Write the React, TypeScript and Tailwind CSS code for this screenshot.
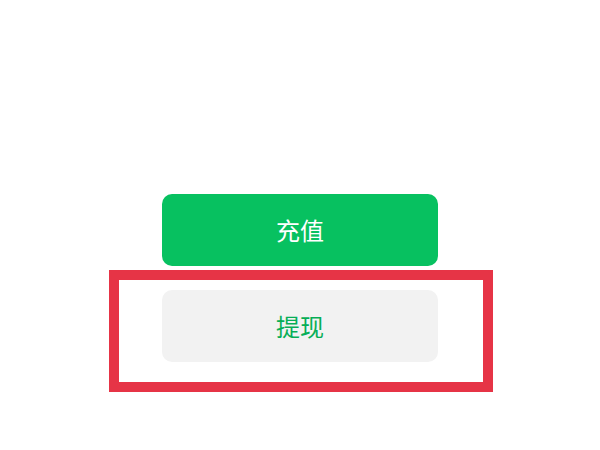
export default function App() {
  return (
    <div
      className="flex h-[450px] w-[600px] flex-col items-center bg-white pt-[194px]"
      style={{ fontFamily: '"Noto Sans CJK SC", "Noto Sans", sans-serif' }}
    >
      <button
        type="button"
        className="flex h-[72px] w-[276px] items-center justify-center rounded-[10px] bg-[#07c160] text-[24px] text-white"
      >
        充值
      </button>
      <div className="ml-[2px] mt-[4px] flex w-[384px] justify-center border-[10px] border-[#e63446] pb-[20px] pt-[10px]">
        <button
          type="button"
          className="mr-[2px] flex h-[72px] w-[276px] items-center justify-center rounded-[10px] bg-[#f2f2f2] text-[24px] text-[#06ae56]"
        >
          提现
        </button>
      </div>
    </div>
  );
}
